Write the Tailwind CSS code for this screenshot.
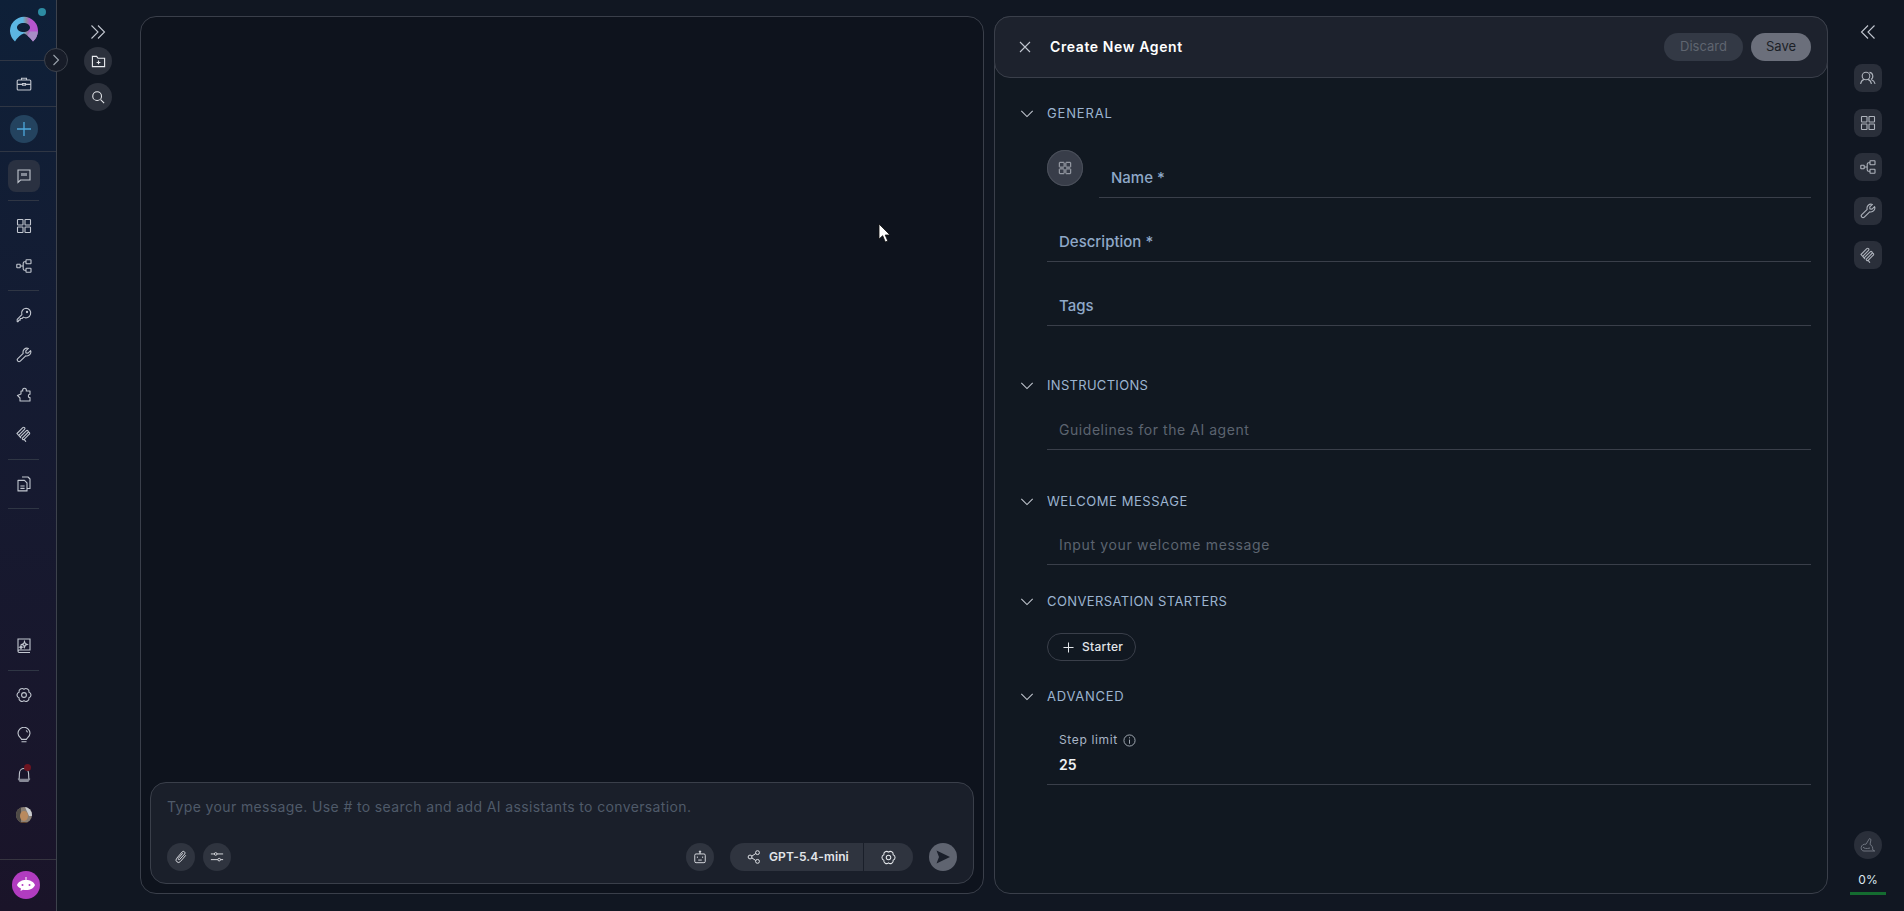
<!DOCTYPE html>
<html lang="en">
<head>
  <meta charset="UTF-8" />
  <title>Create New Agent</title>
  <script src="https://cdn.jsdelivr.net/npm/@tailwindcss/browser@4"></script>
</head>
<body class="h-screen overflow-hidden bg-[#111722] font-[family-name:Inter,sans-serif] text-[#c5cad3]">
  <svg class="hidden">
    <symbol id="i-grid" viewBox="0 0 16 16" fill="none" stroke="currentColor" stroke-width="1.1"><rect x="1.5" y="1.5" width="5.5" height="5.5" rx=".6"/><rect x="9" y="1.5" width="5.5" height="5.5" rx=".6"/><rect x="1.5" y="9" width="5.5" height="5.5" rx=".6"/><rect x="9" y="9" width="5.5" height="5.5" rx=".6"/></symbol>
    <symbol id="i-flow" viewBox="0 0 16 16" fill="none" stroke="currentColor" stroke-width="1.1"><rect x=".8" y="6.3" width="3.4" height="3.4" rx=".4"/><rect x="10" y="1.8" width="5" height="4" rx=".5"/><rect x="10" y="10.2" width="5" height="4" rx=".5"/><path d="M4.2 8h3M10 3.8H8.6a1.4 1.4 0 0 0-1.4 1.4v5.6a1.4 1.4 0 0 0 1.4 1.4H10"/></symbol>
    <symbol id="i-wrench" viewBox="0 0 16 16" fill="none" stroke="currentColor" stroke-width="1.1" stroke-linejoin="round"><path d="M14.6 3.6 12 6.1 9.9 5.9 9.8 3.9 12.4 1.4A4 4 0 0 0 7.2 6.3L1.8 11.6a1.7 1.7 0 0 0 2.5 2.5l5.4-5.3a4 4 0 0 0 4.9-5.2Z"/></symbol>
    <symbol id="i-coil" viewBox="0 0 16 16" fill="none" stroke="currentColor" stroke-width="1.1" stroke-linecap="round" stroke-linejoin="round"><path d="M1 7.5 6.8 1.7a1.2 1.2 0 0 1 1.7 1.7L3.4 8.6a1 1 0 0 0 1.5 1.5L10.2 4.8a1.2 1.2 0 0 1 1.7 1.7L6.6 11.8a1 1 0 0 0 1.5 1.5L13 8.4a1.2 1.2 0 0 0 0-2.2M1 7.5l3.7 4.2M8.1 13.3l1.6 2"/></symbol>
    <symbol id="i-gear" viewBox="0 0 16 16" fill="none" stroke="currentColor" stroke-width="1.1" stroke-linejoin="round"><path d="M8 2.300A3 3 0 0 1 12.940 5.150 3 3 0 0 1 12.940 10.850 3 3 0 0 1 8 13.700 3 3 0 0 1 3.060 10.850 3 3 0 0 1 3.060 5.150 3 3 0 0 1 8 2.300Z"/><circle cx="8" cy="8" r="2.400"/></symbol>
    <symbol id="i-chevrons-r" viewBox="0 0 16 16" fill="none" stroke="currentColor" stroke-width="1.1"><path d="M1.500 1.500 8 8l-6.500 6.500M8 1.500 14.500 8 8 14.500"/></symbol>
    <symbol id="i-down" viewBox="0 0 16 16" fill="none" stroke="currentColor" stroke-width="1.2"><path d="M1.500 4.500 8 11l6.500-6.500"/></symbol>
  </svg>

  <div class="relative flex h-[911px] w-[1904px]">
    <!-- left rail -->
    <aside class="relative flex w-[57px] shrink-0 flex-col border-r border-[#3d424c] bg-gradient-to-b from-[#0e2038] to-[#1a1429] text-[#c2c7d0]">
      <div class="relative flex h-[61px] items-center justify-center border-b border-[#2f3644] pr-[9px]">
        <svg class="h-[28px] w-[28px]" viewBox="0 0 28 28">
          <defs>
            <linearGradient id="logo-fill" x1="0" y1="0" x2="1" y2="0">
              <stop offset="0" stop-color="#5cb6e2"/><stop offset=".45" stop-color="#5cb6e2"/><stop offset=".58" stop-color="#8a8d9c"/><stop offset=".72" stop-color="#b655ce"/><stop offset="1" stop-color="#b655ce"/>
            </linearGradient>
          </defs>
          <path fill="url(#logo-fill)" fill-rule="evenodd" d="M5 25.500A14 14 0 1 1 23 25.500Q18 19 14 17.500 9 19 5 25.500ZM13.500 7C9.900 7 7 9 7 11.500S9.900 16 13.500 16 20 14 20 11.500 17.100 7 13.500 7Z"/>
          <path fill="#a88dc6" d="M20 15.500 27.800 15.500A14 14 0 0 1 23 25.500Q20.500 22 17.500 19.800Z"/>
        </svg>
        <span class="absolute left-[38px] top-[8px] h-[8px] w-[8px] rounded-full bg-[#2d8ca3]"></span>
      </div>
      <div class="flex h-[46px] items-center justify-center border-b border-[#2f3644] pr-[9px]">
        <svg class="h-[16px] w-[16px]" viewBox="0 0 16 16" fill="none" stroke="currentColor" stroke-width="1.1"><rect x="1.200" y="4" width="13.600" height="10" rx="1"/><path d="M5.500 4V2.200h5V4M1.200 8.400h5M9.800 8.400h5M6.500 7.600h3v1.600h-3z"/></svg>
      </div>
      <div class="flex h-[45px] items-center justify-center border-b border-[#2f3644] pr-[9px]">
        <span class="flex h-[28px] w-[28px] items-center justify-center rounded-full bg-[#24435f] text-[#4da8dc]">
          <svg class="h-[16px] w-[16px]" viewBox="0 0 16 16" fill="none" stroke="currentColor" stroke-width="1.3"><path d="M8 1v14M1 8h14"/></svg>
        </span>
      </div>
      <div class="flex flex-col pl-[8px] pr-[17px]">
        <div class="mt-[8px] flex h-[32px] w-[32px] items-center justify-center rounded-lg bg-[#2a3141]">
          <svg class="h-[16px] w-[16px]" viewBox="0 0 16 16" fill="none" stroke="currentColor" stroke-width="1.1"><path d="M2 2h12v10H4.500L2 14.500Z"/><rect x="5" y="5" width="6" height="3" fill="currentColor" stroke="none" opacity=".6"/></svg>
        </div>
        <div class="mt-[8px] h-px bg-[#2f3644]"></div>
        <div class="mt-[5px] flex h-[40px] items-center justify-center"><svg class="h-[16px] w-[16px]"><use href="#i-grid"/></svg></div>
        <div class="flex h-[40px] items-center justify-center"><svg class="h-[16px] w-[16px]"><use href="#i-flow"/></svg></div>
        <div class="mt-[4px] h-px bg-[#2f3644]"></div>
        <div class="mt-[4px] flex h-[40px] items-center justify-center">
          <svg class="h-[16px] w-[16px]" viewBox="0 0 16 16" fill="none" stroke="currentColor" stroke-width="1.1" stroke-linejoin="round"><path d="M10 1.200a4.800 4.800 0 1 1-2.600 8.900L6 11.500H4.200v1.600H2.800l-.6 1.500H1.200v-2.300l4.700-4.700A4.800 4.800 0 0 1 10 1.200Z"/><circle cx="11" cy="5" r=".6" fill="currentColor"/></svg>
        </div>
        <div class="flex h-[40px] items-center justify-center"><svg class="h-[16px] w-[16px]"><use href="#i-wrench"/></svg></div>
        <div class="flex h-[40px] items-center justify-center">
          <svg class="h-[16px] w-[16px]" viewBox="0 0 16 16" fill="none" stroke="currentColor" stroke-width="1.1" stroke-linejoin="round"><path d="M5 4h1.800a1.900 1.900 0 1 1 3.400 0H14v3.200a1.700 1.700 0 1 0 0 3.400v3.400H4V11L1.400 8.400 5 7Z"/></svg>
        </div>
        <div class="flex h-[38px] items-center justify-center"><svg class="h-[16px] w-[16px]"><use href="#i-coil"/></svg></div>
        <div class="mt-[6px] h-px bg-[#2f3644]"></div>
        <div class="flex h-[48px] items-center justify-center">
          <svg class="h-[16px] w-[16px]" viewBox="0 0 16 16" fill="none" stroke="currentColor" stroke-width="1.1" stroke-linejoin="round"><path d="M2 4.400h6.500l2.500 2.500v8H2ZM6 1h6l2 2v9.500h-3M4.400 10h4.200M4.400 12.400h4.200"/></svg>
        </div>
        <div class="h-px bg-[#2f3644]"></div>
      </div>
      <div class="mt-auto flex flex-col pl-[8px] pr-[17px]">
        <div class="flex h-[40px] items-center justify-center">
          <svg class="h-[16px] w-[16px]" viewBox="0 0 16 16" fill="none" stroke="currentColor" stroke-width="1.1"><path d="M2 13.200V1h12v11H3.200A1.300 1.300 0 0 0 2 13.200a1.300 1.300 0 0 0 1.200 1.300H14"/><path d="M8.500 3.400 9.300 5.600l2 .8-2 .8-.8 2.200-.8-2.200-2-.8 2-.8ZM5 7.600l.5 1.200 1 .4-1 .4-.5 1.200-.5-1.200-1-.4 1-.4Z"/></svg>
        </div>
        <div class="mt-[4px] h-px bg-[#2f3644]"></div>
        <div class="mt-[4px] flex h-[40px] items-center justify-center"><svg class="h-[16px] w-[16px]"><use href="#i-gear"/></svg></div>
        <div class="flex h-[40px] items-center justify-center">
          <svg class="h-[16px] w-[16px]" viewBox="0 0 16 16" fill="none" stroke="currentColor" stroke-width="1.1"><path d="M5.600 12.400C5.200 10.800 2 9.600 2 6.300a6 6 0 0 1 12 0c0 3.300-3.200 4.500-3.600 6.100Z"/><path d="M5.500 14.800h5M10 3.500a3 3 0 0 1 1.500 1.800"/></svg>
        </div>
        <div class="relative flex h-[40px] items-center justify-center">
          <svg class="h-[16px] w-[16px]" viewBox="0 0 16 16" fill="none" stroke="currentColor" stroke-width="1.1"><path d="M3 12.200C3.500 10 3.200 8 3.500 6a4.500 4.500 0 0 1 9 0c.3 2 0 4 .5 6.200"/><path d="M2.500 12.200h11l-1.500 2.300H4Z" fill="currentColor" opacity=".65"/></svg>
          <span class="absolute left-[16px] top-[9px] h-[7px] w-[7px] rounded-full bg-[#6d1420]"></span>
        </div>
        <div class="flex h-[40px] items-center justify-center">
          <svg class="h-[16px] w-[16px] rounded-full" viewBox="0 0 16 16"><rect width="16" height="16" fill="#8a7f74"/><path d="M9 0h7v9h-3Z" fill="#c9ccd0"/><path d="M0 0h5v16H0Z" fill="#4e4a46"/><ellipse cx="8" cy="9" rx="4" ry="5" fill="#b98a5e"/><path d="M4 15h8v1H4Z" fill="#5d3d25"/></svg>
        </div>
      </div>
      <div class="mt-[24px] flex h-[52px] items-start justify-center border-t border-[#363540] pr-[5px] pt-[11px]">
        <span class="flex h-[28px] w-[28px] items-center justify-center rounded-full bg-[#b13cc0]">
          <svg class="h-[22px] w-[22px]" viewBox="0 0 22 22" fill="#fff"><path d="M11 3v3" stroke="#fff"/><path d="M11 6c4.500 0 8 2 9 5-1 3-4.500 5-9 5-1 0-2 0-3-.3L5.500 17l.5-2.500C3.800 13.500 2.500 12.500 2 11c1-3 4.500-5 9-5Z"/><circle cx="7.500" cy="11" r="1" fill="#b13cc0"/><circle cx="14.500" cy="11" r="1" fill="#b13cc0"/></svg>
        </span>
      </div>
      <span class="absolute left-[44px] top-[48px] z-10 flex h-[24px] w-[24px] items-center justify-center rounded-full border border-[#3d424c] bg-[#171c28] text-[#9ca3ad]">
        <svg class="h-[12px] w-[12px]" viewBox="0 0 12 12" fill="none" stroke="currentColor" stroke-width="1.1"><path d="M3.500 1 8.500 6l-5 5"/></svg>
      </span>
    </aside>

    <!-- conversations column -->
    <div class="flex w-[83px] shrink-0 flex-col items-center pr-[1px] pt-[24px] text-[#c2c7d0]">
      <svg class="h-[16px] w-[16px]"><use href="#i-chevrons-r"/></svg>
      <span class="mt-[7px] flex h-[28px] w-[28px] items-center justify-center rounded-full bg-[#2c313c] text-[#e8eaee]">
        <svg class="h-[15px] w-[15px]" viewBox="0 0 16 16" fill="none" stroke="currentColor" stroke-width="1.200"><path d="M1.500 13.500V2.500h4.500l1.500 2h7v9Z"/><path d="M8 7v4M6 9h4"/></svg>
      </span>
      <span class="mt-[8px] flex h-[28px] w-[28px] items-center justify-center rounded-full bg-[#2c313c] text-[#e8eaee]">
        <svg class="h-[14px] w-[14px]" viewBox="0 0 16 16" fill="none" stroke="currentColor" stroke-width="1.200"><circle cx="7" cy="7" r="5"/><path d="m11 11 4 4"/></svg>
      </span>
    </div>

    <!-- chat panel -->
    <main class="mt-[16px] flex h-[878px] w-[844px] shrink-0 flex-col justify-end rounded-2xl border border-[#3a3f4a] bg-[#0e131d] p-[9px]">
      <div class="flex h-[102px] flex-col justify-between rounded-2xl border border-[#3a3f4a] bg-[#1a1f2a] px-[16px] pb-[12px] pt-[14px]">
        <p class="text-[14px] leading-[20px] tracking-[.37px] text-[#4f5a69]">Type your message. Use # to search and add AI assistants to conversation.</p>
        <div class="flex items-center">
          <span class="flex h-[28px] w-[28px] items-center justify-center rounded-full bg-[#2f343f] text-[#d8dbe0]">
            <svg class="h-[14px] w-[14px]" viewBox="0 0 16 16" fill="none" stroke="currentColor" stroke-width="1.1"><path d="M13.500 6 7.300 13.200a2.800 2.800 0 0 1-4.300-3.600l6.400-7.500a1.900 1.900 0 0 1 2.900 2.400L6.300 11a1 1 0 0 1-1.500-1.200L10 3.700"/></svg>
          </span>
          <span class="ml-[8px] flex h-[28px] w-[28px] items-center justify-center rounded-full bg-[#2f343f] text-[#d8dbe0]">
            <svg class="h-[14px] w-[14px]" viewBox="0 0 16 16" fill="none" stroke="currentColor" stroke-width="1.1"><path d="M1 4.500h4M8 4.500h7M1 11h8M12 11h3"/><circle cx="6.500" cy="4.500" r="1.500"/><circle cx="10.500" cy="11" r="1.500"/></svg>
          </span>
          <span class="ml-auto flex h-[28px] w-[28px] items-center justify-center rounded-full bg-[#2f343f] text-[#d8dbe0]">
            <svg class="h-[14px] w-[14px]" viewBox="0 0 16 16" fill="none" stroke="currentColor" stroke-width="1.1"><rect x="2" y="4.500" width="12" height="10" rx="1.500"/><path d="M8 4.500V2"/><circle cx="8" cy="1.800" r=".8" fill="currentColor"/><path d="M5 7.500v1.500M11 7.500v1.500M6 11.500h4"/></svg>
          </span>
          <div class="ml-[16px] flex h-[28px] w-[183px] items-center rounded-full bg-[#2f343f] text-[#e3e6ea]">
            <div class="flex h-full w-[134px] items-center border-r border-[#1a1f2a] pl-[17px]">
              <svg class="h-[14px] w-[14px] shrink-0" viewBox="0 0 16 16" fill="none" stroke="currentColor" stroke-width="1.1"><circle cx="3.500" cy="8" r="2.200"/><circle cx="12" cy="3" r="2.200"/><circle cx="12" cy="13" r="2.200"/><path d="m5.500 7 4.500-3M5.500 9l4.500 3"/></svg>
              <span class="ml-[8px] whitespace-nowrap text-[12px] font-semibold tracking-[.1px]">GPT-5.4-mini</span>
            </div>
            <svg class="ml-[17px] h-[15px] w-[15px]"><use href="#i-gear"/></svg>
          </div>
          <span class="ml-[16px] flex h-[28px] w-[28px] items-center justify-center rounded-full bg-[#5f6470] text-[#1a1f2a]">
            <svg class="h-[16px] w-[16px]" viewBox="0 0 16 16" fill="currentColor"><path d="M1.500 1.500 15 8 1.500 14.500 4 8Z"/></svg>
          </span>
        </div>
      </div>
    </main>

    <!-- agent form -->
    <section class="ml-[10px] mt-[16px] flex h-[878px] w-[834px] shrink-0 flex-col rounded-2xl border border-[#3a3f4a] bg-[#111821]">
      <header class="-m-px flex h-[62px] shrink-0 items-center rounded-2xl border border-[#3a3f4a] bg-[#1d222d] pl-[24px] pr-[16px]">
        <svg class="-mt-px h-[12px] w-[12px] text-[#c2c7d0]" viewBox="0 0 12 12" fill="none" stroke="currentColor" stroke-width="1.1"><path d="m1 1 10 10M11 1 1 11"/></svg>
        <h1 class="-mt-px ml-[19px] text-[14px] font-semibold tracking-[.6px] text-white">Create New Agent</h1>
        <span class="ml-auto flex h-[28px] w-[79px] items-center justify-center rounded-full bg-[#333945] text-[13px] text-[#5f6570]">Discard</span>
        <span class="ml-[8px] flex h-[28px] w-[60px] items-center justify-center rounded-full bg-[#6b6f7b] text-[13px] text-[#1b1f27]">Save</span>
      </header>

      <div class="pl-[24px] pr-[16px]">
        <div class="mt-[27px] flex h-[20px] items-center pl-px text-[#c2c7d0]">
          <svg class="h-[14px] w-[14px]"><use href="#i-down"/></svg>
          <h2 class="ml-[13px] text-[13px] tracking-[.85px] text-[#9cb4d0]">GENERAL</h2>
        </div>
        <div class="ml-[28px] mt-[26px] flex">
          <span class="flex h-[36px] w-[36px] shrink-0 items-center justify-center rounded-full bg-[#383d49] text-[#aeb2ba] shadow-[inset_0_0_0_1px_#4a4f5a]">
            <svg class="h-[14px] w-[14px]"><use href="#i-grid"/></svg>
          </span>
          <div class="ml-[16px] mt-[8px] flex h-[40px] flex-1 items-center border-b border-[#3a3f4a] pl-[12px] pt-[2px] text-[15px] font-medium text-[#8fa8c8]">Name *</div>
        </div>
        <div class="ml-[28px] mt-[23px] flex h-[41px] items-center border-b border-[#3a3f4a] pl-[12px] pt-[2px] text-[15px] font-medium text-[#8fa8c8]">Description *</div>
        <div class="ml-[28px] mt-[23px] flex h-[41px] items-center border-b border-[#3a3f4a] pl-[12px] pt-[3px] text-[15px] font-medium text-[#8fa8c8]">Tags</div>

        <div class="mt-[50px] flex h-[20px] items-center pl-px text-[#c2c7d0]">
          <svg class="h-[14px] w-[14px]"><use href="#i-down"/></svg>
          <h2 class="ml-[13px] text-[13px] tracking-[.3px] text-[#9cb4d0]">INSTRUCTIONS</h2>
        </div>
        <div class="ml-[28px] mt-[16px] flex h-[38px] items-center border-b border-[#3a3f4a] pb-[2px] pl-[12px] text-[14px] tracking-[.55px] text-[#5c6470]">Guidelines for the AI agent</div>

        <div class="mt-[42px] flex h-[20px] items-center pl-px text-[#c2c7d0]">
          <svg class="h-[14px] w-[14px]"><use href="#i-down"/></svg>
          <h2 class="ml-[13px] text-[13px] tracking-[.55px] text-[#9cb4d0]">WELCOME MESSAGE</h2>
        </div>
        <div class="ml-[28px] mt-[17px] flex h-[36px] items-center border-b border-[#3a3f4a] pb-[5px] pl-[12px] text-[14px] tracking-[.65px] text-[#5c6470]">Input your welcome message</div>

        <div class="mt-[27px] flex h-[20px] items-center pl-px text-[#c2c7d0]">
          <svg class="h-[14px] w-[14px]"><use href="#i-down"/></svg>
          <h2 class="ml-[13px] text-[13px] tracking-[.4px] text-[#9cb4d0]">CONVERSATION STARTERS</h2>
        </div>
        <div class="ml-[28px] mt-[21px] flex h-[28px] w-[89px] items-center rounded-full border border-[#3a3f4a] pl-[15px] text-[12px] font-medium tracking-[.3px] text-[#e3e6ea]">
          <svg class="h-[11px] w-[11px]" viewBox="0 0 12 12" fill="none" stroke="currentColor" stroke-width="1.1"><path d="M6 .5v11M.5 6h11"/></svg>
          <span class="ml-[8px]">Starter</span>
        </div>

        <div class="mt-[26px] flex h-[20px] items-center pl-px text-[#c2c7d0]">
          <svg class="h-[14px] w-[14px]"><use href="#i-down"/></svg>
          <h2 class="ml-[13px] text-[13px] tracking-[.75px] text-[#9cb4d0]">ADVANCED</h2>
        </div>
        <div class="ml-[28px] mt-[24px] border-b border-[#3a3f4a] pb-[9px] pl-[12px]">
          <div class="flex h-[18px] items-center text-[12px] tracking-[.65px] text-[#a9b5c6]">
            Step limit
            <svg class="ml-[5px] h-[13px] w-[13px] text-[#a9b0ba]" viewBox="0 0 14 14" fill="none" stroke="currentColor"><circle cx="7" cy="7" r="6"/><path d="M7 6v4.500M7 3.500v1.200"/></svg>
          </div>
          <div class="mt-[6px] text-[14px] font-semibold leading-[20px] text-[#eef0f3]">25</div>
        </div>
      </div>
    </section>

    <!-- right rail -->
    <aside class="flex flex-1 flex-col items-center pl-[4px] pt-[24px] text-[#aeb3bc]">
      <svg class="h-[16px] w-[16px] rotate-180 text-[#c2c7d0]"><use href="#i-chevrons-r"/></svg>
      <span class="mt-[24px] flex h-[28px] w-[28px] items-center justify-center rounded-lg bg-[#2a2f3a]">
        <svg class="h-[16px] w-[16px]" viewBox="0 0 16 16" fill="none" stroke="currentColor" stroke-width="1.1"><circle cx="6" cy="6" r="3.800"/><path d="M9.500 2.400a3.800 3.800 0 0 1 1.500 7M.6 14c.4-2.500 2-4.200 3.400-4.600M8 9.400c1.400.4 3 2 3.400 4.600M11.500 9.800c1.800.6 3 2 3.600 4"/></svg>
      </span>
      <span class="mt-[17px] flex h-[28px] w-[28px] items-center justify-center rounded-lg bg-[#2a2f3a]"><svg class="h-[16px] w-[16px]"><use href="#i-grid"/></svg></span>
      <span class="mt-[16px] flex h-[28px] w-[28px] items-center justify-center rounded-lg bg-[#2a2f3a]"><svg class="h-[16px] w-[16px]"><use href="#i-flow"/></svg></span>
      <span class="mt-[16px] flex h-[28px] w-[28px] items-center justify-center rounded-lg bg-[#2a2f3a]"><svg class="h-[16px] w-[16px]"><use href="#i-wrench"/></svg></span>
      <span class="mt-[16px] flex h-[28px] w-[28px] items-center justify-center rounded-lg bg-[#2a2f3a]"><svg class="h-[16px] w-[16px]"><use href="#i-coil"/></svg></span>
      <span class="mt-auto flex h-[28px] w-[28px] items-center justify-center rounded-full bg-[#2a2f3a] text-[#6e747f]">
        <svg class="h-[16px] w-[16px]" viewBox="0 0 16 16" fill="none" stroke="currentColor" stroke-width="1"><path d="M9.500 1.500 11 2.500 10 7.500c2 .5 2.800 3 2.800 5.500l2 1H4c-2 0-3-1.500-2.800-3.500C1.500 8 3.500 7 6 7.200Z"/><path d="M3 10c1 1.500 3.500 2 7 1"/></svg>
      </span>
      <span class="mt-[13px] text-[12px] leading-[16px] text-[#dfe7f1]">0%</span>
      <span class="mb-[16px] mt-[4px] h-[3px] w-[36px] bg-[#146c30]"></span>
    </aside>

    <!-- mouse pointer from the capture -->
    <svg class="absolute left-[878px] top-[223px] h-[20px] w-[14px]" viewBox="0 0 14 20"><path d="M1 1v15l3.700-3.300L7.300 19l2.500-1-2.600-6H12Z" fill="#fff" stroke="#111" stroke-width=".8"/></svg>
  </div>
</body>
</html>
